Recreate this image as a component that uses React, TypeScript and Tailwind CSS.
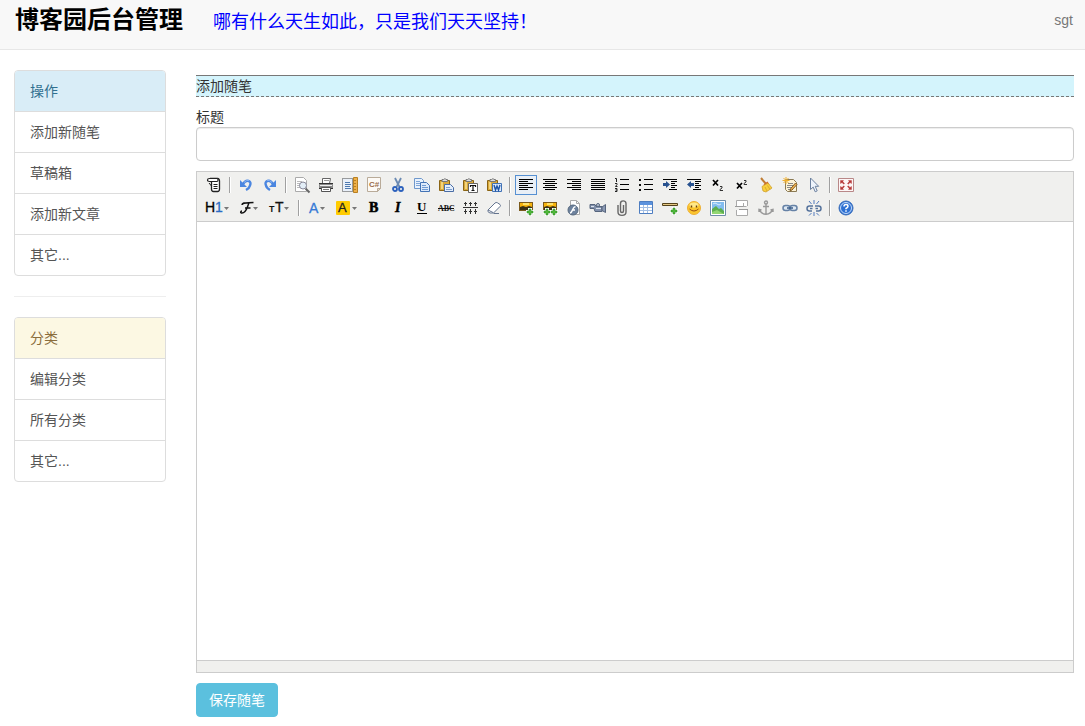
import { useState } from 'react'
import type { ReactNode } from 'react'

interface Tool {
  title: string
  width?: number
  icon: ReactNode
}

const arrow = (x: number) => <path d={`M${x} 7h5l-2.5 3z`} fill="#777" />

const serif = 'Liberation Serif, serif'
const sans = 'Liberation Sans, sans-serif'

// horizontal strokes used by the paragraph icons: [x, y, width]
const bars = (rows: number[][]) => (
  <g fill="#000" shapeRendering="crispEdges">
    {rows.map(([x, y, w]) => <rect key={`${x}-${y}`} x={x} y={y} width={w} height="1" />)}
  </g>
)

const clipboard = (
  <>
    <path d="M1.5 3.5h10v10h-10z" fill="#d9a93a" stroke="#8a6414" />
    <path d="M3 5h2v7H3z" fill="#f3d47c" />
    <path d="M4 4.500V2.500h1.500a1.500 1.500 0 0 1 2.500 0H9.500v2z" fill="#ddd" stroke="#777" />
  </>
)

const photo = (
  <>
    <path d="M1 2h14v9H1z" fill="#7a5a1c" />
    <path d="M2 3h12v4H2z" fill="#f6b40e" />
    <path d="M5 3h6v2H5z" fill="#ffe36a" />
    <path d="M2 7l3-1 3 1 3-1 3 1v3H2z" fill="#3a3015" />
  </>
)

const plus = (x: number, y: number) => (
  <g>
    <path d={`M${x - 1} ${y - 3}h2v2h2v2h-2v2h-2v-2h-2v-2h2z`} fill="#4fb83a" stroke="#fff" strokeWidth="2" />
    <path d={`M${x - 1} ${y - 3}h2v2h2v2h-2v2h-2v-2h-2v-2h2z`} fill="#4fb83a" stroke="#2f8a22" strokeWidth=".5" />
  </g>
)

const rowOne: Tool[][] = [
  [
    {
      title: 'HTML代码',
      icon: (
        <g fill="none" stroke="#222">
          <path d="M5.500 5v7q0 2.500 2 2.500h4q2 0 2-2.500V4q0-2.500-2-2.500H4" fill="#fff" strokeWidth="1.300" />
          <path d="M11 4.500H3.500Q1.500 4.500 1.500 3T3.500 1.500H11q1 0 1 1.500t-1 1.500z" fill="#fff" strokeWidth="1.200" />
          <path d="M7.500 7.500h4M7.500 9.500h4M7.500 11.500h4M3 6l2.500 3" />
        </g>
      ),
    },
  ],
  [
    {
      title: '后退',
      icon: (
        <>
          <path d="M2 3v7h7z" fill="#4b86e0" />
          <path d="M5 7Q7.500 3 10.500 4T12 8.500Q11.500 11 8 13" fill="none" stroke="#4b86e0" strokeWidth="2.400" />
          <path d="M6 5.500Q8.500 2.500 11 3.300" fill="none" stroke="#8db6f2" />
        </>
      ),
    },
    {
      title: '前进',
      icon: (
        <>
          <path d="M14 3v7H7z" fill="#4b86e0" />
          <path d="M11 7Q8.500 3 5.500 4T4 8.500Q4.500 11 8 13" fill="none" stroke="#4b86e0" strokeWidth="2.400" />
          <path d="M10 5.500Q7.500 2.500 5 3.300" fill="none" stroke="#8db6f2" />
        </>
      ),
    },
  ],
  [
    {
      title: '预览',
      icon: (
        <>
          <path d="M1.500.500h8l3 3v11h-11z" fill="#fff" stroke="#aaa" />
          <path d="M3 4.500h5M3 6.500h3M3 8.500h3M3 10.500h3" stroke="#bbb" />
          <path d="M11.500 11.500l4 4" stroke="#666" strokeWidth="2" />
          <circle cx="9" cy="8.500" r="3.500" fill="#e3eef7" stroke="#889" />
        </>
      ),
    },
    {
      title: '打印',
      icon: (
        <>
          <path d="M4.500 6.500v-5h8l-1 5" fill="#fff" stroke="#666" />
          <path d="M6 3.500h5" stroke="#999" />
          <path d="M1 6h14v6H1z" fill="#8a8a8a" />
          <path d="M1 6.500h14M1 11.500h14" stroke="#333" />
          <path d="M2 8.500h12" stroke="#eee" />
          <path d="M3.500 10.500h9v4h-9z" fill="#fff" stroke="#555" />
          <path d="M5 12.500h6" stroke="#777" />
        </>
      ),
    },
    {
      title: '插入模板',
      icon: (
        <>
          <path d="M.5 1.500h10v13H.500z" fill="#e9f0f9" stroke="#444" strokeDasharray="1 1" />
          <path d="M3 5.500h5M3 7.500h6M3 9.500h5M3 11.500h6" stroke="#4d79b0" />
          <path d="M11.500.500h4v15h-4z" fill="#eeb04a" stroke="#b98021" />
          <path d="M12 3.500h2M12 6.500h2M12 9.500h2M12 12.500h2" stroke="#b98021" />
        </>
      ),
    },
    {
      title: '插入程序代码',
      icon: (
        <>
          <path d="M1.500.500h13v11l-3 3h-10z" fill="#fdfaf6" stroke="#b9ab99" />
          <path d="M14.500 11.500h-3v3z" fill="#e4d6c5" stroke="#b9ab99" />
          <text x="3" y="10" fontSize="8" fontWeight="bold" fontFamily={sans} fill="#9a6c48">C#</text>
        </>
      ),
    },
    {
      title: '剪切',
      icon: (
        <>
          <path d="M5 1l4.500 9M11 1L6.500 10" stroke="#6b8ab3" strokeWidth="1.800" />
          <circle cx="5" cy="12" r="2" fill="none" stroke="#2d62bd" strokeWidth="1.800" />
          <circle cx="11" cy="12" r="2" fill="none" stroke="#2d62bd" strokeWidth="1.800" />
        </>
      ),
    },
    {
      title: '复制',
      icon: (
        <>
          <path d="M.5 1.500h7l2 2v8h-9z" fill="#e9f2fd" stroke="#6f98cc" />
          <path d="M2 4.500h4M2 6.500h4M2 8.500h4" stroke="#7fa6d8" />
          <path d="M6.500 5.500h6l3 3v6h-9z" fill="#dce9fa" stroke="#4373b5" />
          <path d="M8 8.500h4M8 10.500h6M8 12.500h6" stroke="#6f9ad3" />
        </>
      ),
    },
    {
      title: '粘贴',
      icon: (
        <>
          {clipboard}
          <path d="M6.500 7.500h6l3 3v4h-9z" fill="#e4eefb" stroke="#4a6da5" />
          <path d="M8 10.500h4M8 12.500h6" stroke="#7d9fce" />
        </>
      ),
    },
    {
      title: '粘贴为无格式文本',
      icon: (
        <>
          {clipboard}
          <path d="M6.500 6.500h9v9h-9z" fill="#fff" stroke="#666" />
          <path d="M8.500 10V8.500h5V10M11 8.500v5.500M9.500 13.500h3" fill="none" stroke="#111" strokeWidth="1.200" />
        </>
      ),
    },
    {
      title: '从Word粘贴',
      icon: (
        <>
          {clipboard}
          <path d="M6.500 6.500h9v8h-9z" fill="#dce9fb" stroke="#4273b5" />
          <path d="M8 8l1.500 5L11 9l1.500 4L14 8" fill="none" stroke="#1d55a8" strokeWidth="1.400" />
        </>
      ),
    },
  ],
  [
    { title: '左对齐', icon: bars([[1, 2, 14], [1, 4, 9], [1, 6, 14], [1, 8, 9], [1, 10, 14], [1, 12, 9]]) },
    { title: '居中', icon: bars([[1, 2, 14], [3, 4, 10], [1, 6, 14], [3, 8, 10], [1, 10, 14], [3, 12, 10]]) },
    { title: '右对齐', icon: bars([[1, 2, 14], [6, 4, 9], [1, 6, 14], [6, 8, 9], [1, 10, 14], [6, 12, 9]]) },
    { title: '两端对齐', icon: bars([[1, 2, 14], [1, 4, 14], [1, 6, 14], [1, 8, 14], [1, 10, 14], [1, 12, 14]]) },
    {
      title: '编号',
      icon: (
        <>
          {bars([[6, 2, 9], [6, 7, 9], [6, 12, 9]])}
          <path d="M1 1.500h1.500V5M1 6.500h2v1l-1.500 2H3.500M1 11.500h2v3H1M1.500 13H3" fill="none" stroke="#222" />
        </>
      ),
    },
    {
      title: '项目符号',
      icon: (
        <>
          {bars([[6, 2, 9], [6, 7, 9], [6, 12, 9]])}
          <path d="M1 2h2v2H1zM1 7h2v2H1zM1 12h2v2H1z" fill="#111" />
        </>
      ),
    },
    {
      title: '增加缩进',
      icon: (
        <>
          {bars([[1, 2, 14], [9, 4, 6], [9, 6, 4], [9, 8, 6], [9, 10, 4], [7, 12, 8]])}
          <path d="M1 6h3V4l4 3.500L4 11V9H1z" fill="#27518f" />
        </>
      ),
    },
    {
      title: '减少缩进',
      icon: (
        <>
          {bars([[1, 2, 14], [9, 4, 6], [9, 6, 4], [9, 8, 6], [9, 10, 4], [7, 12, 8]])}
          <path d="M8 6H5V4L1 7.500 5 11V9h3z" fill="#27518f" />
        </>
      ),
    },
    {
      title: '下标',
      icon: (
        <>
          <path d="M3 3l5 5.500M8 3L3 8.500" stroke="#000" strokeWidth="1.700" />
          <path d="M10 9.500h2v1.500l-2 1.500v1h3" fill="none" stroke="#333" />
        </>
      ),
    },
    {
      title: '上标',
      icon: (
        <>
          <path d="M3 6l5 5.500M8 6L3 11.500" stroke="#000" strokeWidth="1.700" />
          <path d="M10 3.500h2V5l-2 1.500v1h3" fill="none" stroke="#333" />
        </>
      ),
    },
    {
      title: '清理HTML代码',
      icon: (
        <>
          <path d="M3 1l5 6" stroke="#c07d34" strokeWidth="2" />
          <path d="M5.500 7.500l4-3 2 3-4 3z" fill="#d0672c" />
          <path d="M4 9.500l6-3.500 4 5-6 4-3-1z" fill="#f8cf3b" stroke="#d0a02c" strokeWidth=".8" />
          <path d="M7 10l2 4M9.500 8.500l2.500 4" stroke="#d0a02c" strokeWidth=".8" />
        </>
      ),
    },
    {
      title: '一键排版',
      icon: (
        <>
          <path d="M3.500 2.500h8l3 3v9h-9l-2-2z" fill="#fdf3d6" stroke="#8b7a54" />
          <path d="M6 6.500h5M5 8.500h7M5 10.500h6M6 12.500h5" stroke="#888" />
          <path d="M4 0v7M.500 3.500h7M1.500 1l5 5M6.500 1l-5 5" stroke="#f0b02e" />
          <path d="M15 7.500L10 13l-2 1 .5-2.200L13.500 6z" fill="#f0b04d" stroke="#6c4b18" strokeWidth=".8" />
        </>
      ),
    },
    { title: '全选', icon: <path d="M4.500 1v11.500l2.700-2.400 2 4.700 2-.9-2-4.600h3.500z" fill="#eef4fc" stroke="#6c819f" /> },
  ],
  [
    {
      title: '全屏显示',
      icon: (
        <>
          <path d="M.5 1.500h15v13H.500z" fill="#fdf6f6" stroke="#b98888" />
          <path d="M2.500 3.500h3L4.800 4.600 6.500 6.500 5.700 7.200 4 5.500 2.500 6.500zM13.500 3.500h-3l.7 1.100L9.500 6.500l.8.700L12 5.500l1.500 1zM2.500 12.500h3l-.7-1.100L6.500 9.500l-.8-.7L4 10.500l-1.500-1zM13.500 12.500h-3l.7-1.100L9.500 9.500l.8-.7 1.700 1.700 1.500-1z" fill="#b53636" stroke="#b53636" strokeWidth=".4" />
        </>
      ),
    },
  ],
]

const rowTwo: Tool[][] = [
  [
    {
      title: '段落',
      width: 25,
      icon: (
        <>
          <text x="-1" y="12" fontSize="14" fontFamily={sans} fill="#000" stroke="#000" strokeWidth=".3">H</text>
          <text x="9" y="12" fontSize="14" fontFamily={sans} fill="#2a6cc4" stroke="#2a6cc4" strokeWidth=".3">1</text>
          {arrow(18)}
        </>
      ),
    },
    {
      title: '字体',
      width: 21,
      icon: (
        <>
          <path d="M3 5C3 2 8 3 14.500 2.500M10 3C8 7 7.500 13 3 13c-2 0-1.500-2 0-2M6 8h5.500" fill="none" stroke="#111" strokeWidth="1.500" />
          {arrow(14)}
        </>
      ),
    },
    {
      title: '文字大小',
      width: 23,
      icon: (
        <>
          <text x="1" y="12" fontSize="9" fontWeight="bold" fontFamily={sans} fill="#111">T</text>
          <text x="7" y="12" fontSize="14" fontFamily={sans} fill="#111" stroke="#111" strokeWidth=".3">T</text>
          {arrow(16)}
        </>
      ),
    },
  ],
  [
    {
      title: '文字颜色',
      width: 20,
      icon: (
        <>
          <text x="2" y="13" fontSize="14" fontFamily={sans} fill="#3579d6" stroke="#3579d6" strokeWidth=".3">A</text>
          {arrow(13)}
        </>
      ),
    },
    {
      title: '文字背景',
      width: 23,
      icon: (
        <>
          <rect x="1" y="1" width="14" height="14" rx="1" fill="#fc0" />
          <text x="3" y="12" fontSize="13" fontFamily={sans} fill="#222" stroke="#222" strokeWidth=".3">A</text>
          {arrow(17)}
        </>
      ),
    },
    { title: '粗体', icon: <text x="3" y="12" fontSize="14" fontWeight="bold" fontFamily={serif} stroke="#000" strokeWidth=".6">B</text> },
    { title: '斜体', icon: <text x="5" y="12" fontSize="14" fontWeight="bold" fontStyle="italic" fontFamily={serif} stroke="#000" strokeWidth=".4">I</text> },
    {
      title: '下划线',
      icon: (
        <>
          <text x="3" y="11" fontSize="13" fontWeight="bold" fontFamily={serif} fill="#000">U</text>
          <path d="M3 13.500h10" stroke="#000" />
        </>
      ),
    },
    {
      title: '删除线',
      icon: (
        <>
          <text x="0" y="11" fontSize="8" fontWeight="bold" fontFamily={serif} fill="#111">ABC</text>
          <path d="M0 8.500h16" stroke="#111" />
        </>
      ),
    },
    {
      title: '行距',
      icon: <path d="M1 7.500h15M3.500 2v4M8.500 2v4M13.500 2v4M3.500 9v5M8.500 9v5M13.500 9v5M2 3.500h3M7 3.500h3M12 3.500h3M2 11.500h3M7 11.500h3M12 11.500h3" stroke="#333" />,
    },
    {
      title: '删除格式',
      icon: (
        <>
          <path d="M2 10l7-7q1-1 2.500-.2L14 4.500q1 1 0 2L7.500 13H4q-3-1-2-3z" fill="#fff" stroke="#64748f" />
          <path d="M2 10l5 2.500M7.500 13.500H13" stroke="#64748f" />
        </>
      ),
    },
  ],
  [
    { title: '图片', icon: <>{photo}{plus(12, 12)}</> },
    { title: '批量图片上传', icon: <>{photo}{plus(5, 12)}{plus(12, 12)}</> },
    {
      title: 'Flash',
      icon: (
        <>
          <path d="M4.500.500h6l3 3v11h-9z" fill="#fff" stroke="#aaa" />
          <path d="M10.500.500v3h3" fill="none" stroke="#aaa" />
          <circle cx="7" cy="10" r="5" fill="#6e829d" stroke="#56697f" />
          <path d="M9.500 6.500C6 7 7 12.500 4 13M6 10h3" fill="none" stroke="#fff" strokeWidth="1.500" />
        </>
      ),
    },
    {
      title: '视音频',
      icon: (
        <>
          <path d="M0 4.500h5l1 2h6v5H5l-1-3H0z" fill="#8392ad" stroke="#56657d" />
          <path d="M12 7l3.500-2.500v8L12 10.500z" fill="#8c9ab4" stroke="#56657d" />
          <circle cx="8" cy="5" r="1.500" fill="#cad3e1" stroke="#56657d" />
          <path d="M1 6.500h3M6 8.500h5" stroke="#dce3ee" />
        </>
      ),
    },
    {
      title: '插入文件',
      icon: <path d="M4 5v7c0 4.500 8 4.500 8 0V3.500c0-3.500-5.500-3.500-5.500 0V11c0 2 3 2 3 0V5" fill="none" stroke="#666" strokeWidth="1.400" />,
    },
    {
      title: '表格',
      icon: (
        <>
          <path d="M1.500 1.500h13v12h-13z" fill="#fff" stroke="#4d7dc0" />
          <path d="M2 2h12v3H2z" fill="#5b92dd" />
          <path d="M2 7.500h12M2 10.500h12M5.500 5v8M9.500 5v8" stroke="#a3bfe4" />
        </>
      ),
    },
    {
      title: '插入横线',
      icon: (
        <>
          <path d="M.5 3.500h15v2H.500z" fill="#e5c884" stroke="#55431c" />
          {plus(12, 11)}
        </>
      ),
    },
    {
      title: '插入表情',
      icon: (
        <>
          <circle cx="8" cy="8" r="6.500" fill="#fbc52d" stroke="#eeb035" />
          <ellipse cx="8" cy="5" rx="4.500" ry="2.500" fill="#ffe88a" />
          <path d="M5.500 5.500v2M10.500 5.500v2" stroke="#6b4108" strokeWidth="1.400" />
          <path d="M3.500 9q4.500 4 9 0" fill="none" stroke="#9b4b10" />
        </>
      ),
    },
    {
      title: '百度地图',
      icon: (
        <>
          <path d="M.5.500h15v15H.500z" fill="#fff" stroke="#6f8da9" />
          <path d="M2 2h12v12H2z" fill="#83bdf0" />
          <path d="M2 9l4-3 3 3 2-1 3 3v3H2z" fill="#5cae50" />
          <path d="M2 12l5-2 7 4H2z" fill="#92d672" />
          <path d="M3 4q2-2 4 0t4 0" stroke="#d9ecfb" fill="none" />
        </>
      ),
    },
    {
      title: '插入分页符',
      icon: (
        <>
          <path d="M2.500 6V.500h11V6M2.500 10v5.500h11V10" fill="#fff" stroke="#aaa" />
          <path d="M1 6.500h9M5 9.500h9" stroke="#999" />
          <path d="M9.500 3v3.500h3" fill="none" stroke="#aaa" />
        </>
      ),
    },
    {
      title: '锚点',
      icon: (
        <g fill="none" stroke="#999" strokeWidth="1.400">
          <circle cx="8" cy="2.500" r="1.500" />
          <path d="M8 4v10M5 6.500h6M1.500 9.500Q3 14 8 14.300 13 14 14.500 9.500M1 12V9.300l2.500.700M15 12V9.300l-2.500.700" />
        </g>
      ),
    },
    {
      title: '超级链接',
      icon: (
        <g fill="none" stroke="#6682a6" strokeWidth="1.500">
          <rect x="1" y="5.500" width="7" height="5" rx="2.500" fill="#dce7f3" />
          <rect x="8" y="5.500" width="7" height="5" rx="2.500" fill="#dce7f3" />
          <path d="M5 8h6" stroke="#395b88" />
        </g>
      ),
    },
    {
      title: '取消超级链接',
      icon: (
        <g fill="none" stroke="#56739c" strokeWidth="1.500">
          <path d="M7 6H3.500q-2.500 0-2.500 2.500t2.500 2.500H6M9 6h3.500Q15 6 15 8.500T12.500 11H10M4 8.500h2.500M9.500 8.500H12" />
          <path d="M8 0v4M3 1l2.500 3M13 1l-2.500 3M8 12v4M3 15.500L5.500 13M13 15.500L10.500 13" stroke="#527bbd" strokeWidth="1" />
        </g>
      ),
    },
  ],
  [
    {
      title: '关于',
      icon: (
        <>
          <circle cx="8" cy="8" r="7" fill="#2d70d3" stroke="#3a6db8" />
          <circle cx="8" cy="8" r="5.500" fill="none" stroke="#c3dafa" />
          <path d="M6 6.500q0-2 2-2t2 1.700q0 1.100-2 2.300v.7M8 10.300v1.500" fill="none" stroke="#fff" strokeWidth="1.500" />
        </>
      ),
    },
  ],
]

const menus = [
  { title: '操作', head: 'bg-[#d9edf7] text-[#31708f]', items: ['添加新随笔', '草稿箱', '添加新文章', '其它...'] },
  { title: '分类', head: 'bg-[#fcf8e3] text-[#8a6d3b]', items: ['编辑分类', '所有分类', '其它...'] },
]

function ToolbarRow({ groups, selected, onSelect }: { groups: Tool[][]; selected?: string; onSelect?: (t: string) => void }) {
  return (
    <div className="flex flex-wrap">
      {groups.map((group, i) => (
        <div key={i} className="flex items-center">
          {i > 0 && <span className="mx-[3px] h-4 w-[2px] border-l border-r border-l-[#a0a0a0] border-r-white" />}
          {group.map(t => (
            <button
              key={t.title}
              type="button"
              title={t.title}
              aria-label={t.title}
              onClick={() => onSelect?.(t.title)}
              className={`m-px border px-[2px] py-px ${selected === t.title ? 'border-[#5690d2] bg-[#e9eff6]' : 'border-transparent hover:border-[#5690d2]'}`}
            >
              <svg className="block overflow-visible" width={t.width || 16} height="16" viewBox={`0 0 ${t.width || 16} 16`}>{t.icon}</svg>
            </button>
          ))}
        </div>
      ))}
    </div>
  )
}

export default function App() {
  const [titulo, setTitulo] = useState('')
  const [align, setAlign] = useState('左对齐')

  return (
    <div className="bg-white text-sm leading-5 text-[#333] font-['Liberation_Sans','Noto_Sans_CJK_SC',sans-serif]">
      <header className="flex h-[50px] items-start border-b border-[#e7e7e7] bg-[#f8f8f8] pr-3 pl-[15px]">
        <h1 className="text-2xl leading-10 font-bold text-black">博客园后台管理</h1>
        <p className="ml-[30px] text-lg leading-[44px] text-[#00f]">哪有什么天生如此，只是我们天天坚持！</p>
        <a href="#" className="ml-auto leading-10 text-[#777]">sgt</a>
      </header>

      <div className="flex gap-[30px] pt-5 pr-[11px] pl-[14px]">
        <nav className="w-[152px] shrink-0">
          {menus.map((menu, i) => (
            <div key={menu.title}>
              {i > 0 && <hr className="my-5 border-[#eee]" />}
              <ul className="divide-y divide-[#ddd] overflow-hidden rounded border border-[#ddd]">
                <li className={`px-[15px] py-[10px] ${menu.head}`}>{menu.title}</li>
                {menu.items.map(item => (
                  <li key={item}>
                    <a href="#" className="block px-[15px] py-[10px] text-[#555] hover:bg-[#f5f5f5]">{item}</a>
                  </li>
                ))}
              </ul>
            </div>
          ))}
        </nav>

        <main className="min-w-0 flex-1 pt-[5px]">
          <form onSubmit={e => e.preventDefault()}>
            <h2 className="border-t border-b border-t-[#777] border-b-[#777] bg-[#d4f4fc] [border-bottom-style:dashed]">添加随笔</h2>
            <label htmlFor="titulo" className="mt-[10px] block">标题</label>
            <input
              id="titulo"
              type="text"
              value={titulo}
              onChange={e => setTitulo(e.target.value)}
              className="block h-[34px] w-full rounded border border-[#ccc] px-3 shadow-[inset_0_1px_1px_rgba(0,0,0,0.075)] outline-none focus:border-[#66afe9]"
            />

            <div className="mt-[10px] border border-[#ccc]">
              <div className="flex flex-col gap-px border-b border-[#ccc] bg-[#f0f0ee] px-[5px] py-[2px]">
                <ToolbarRow groups={rowOne} selected={align} onSelect={t => t.includes('对齐') || t === '居中' ? setAlign(t) : undefined} />
                <ToolbarRow groups={rowTwo} />
              </div>
              <textarea aria-label="正文" className="block h-[438px] w-full resize-none p-2 outline-none" />
              <div className="h-3 border-t border-[#ccc] bg-[#f0f0ee]" />
            </div>

            <button type="submit" className="mt-[10px] rounded border border-[#5bc0de] bg-[#5bc0de] px-3 py-[6px] text-white hover:bg-[#31b0d5]">
              保存随笔
            </button>
          </form>
        </main>
      </div>
    </div>
  )
}
